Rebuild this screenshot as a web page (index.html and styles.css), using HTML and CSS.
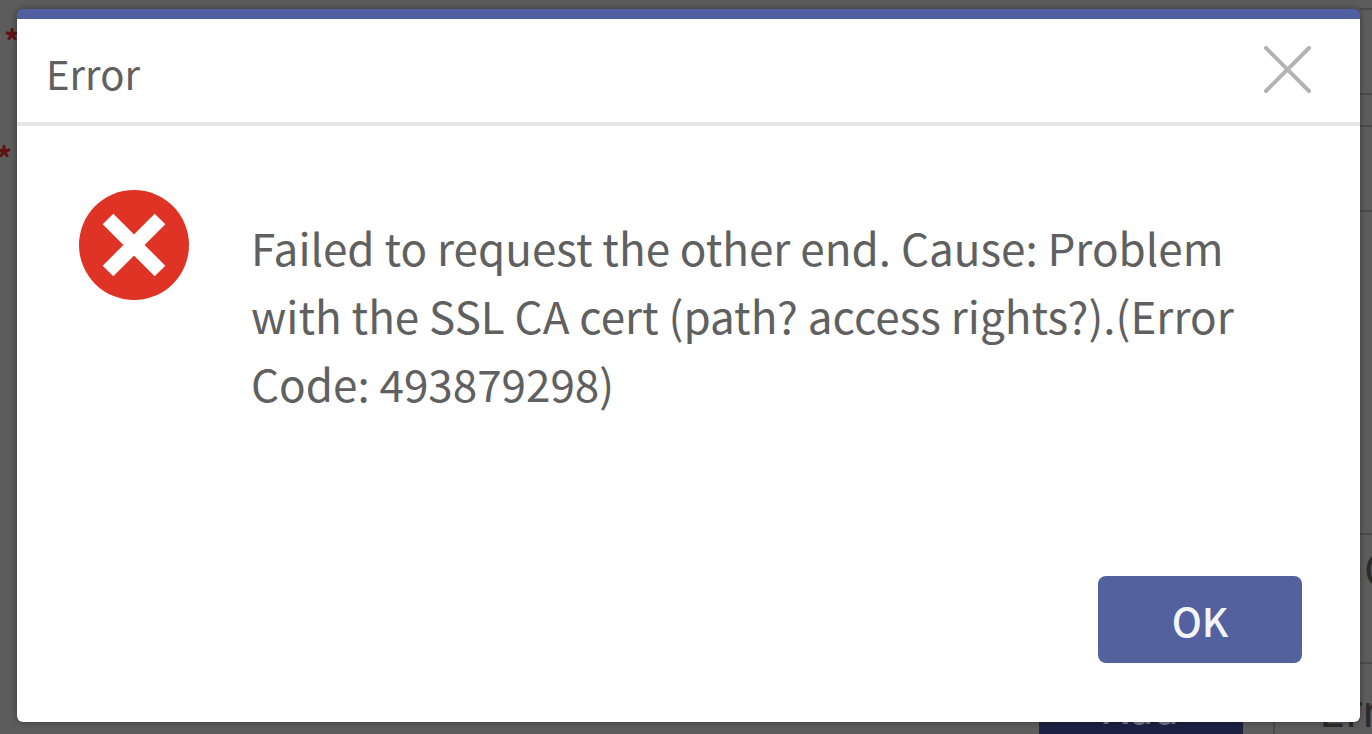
FILE: index.html
```html
<!DOCTYPE html>
<html lang="en">
<head>
    <meta charset="UTF-8">
    <meta name="viewport" content="width=device-width, initial-scale=1.0">
    <title>Error</title>
    <link rel="stylesheet" href="styles.css">
</head>
<body>
    <!-- form behind the dialog -->
    <div class="page">
        <div class="fields">
            <div class="required">
                <span class="indent">*</span>
                <span>*</span>
            </div>
            <div class="boxes">
                <div class="box"></div>
                <div class="space"></div>
                <div class="box"></div>
                <div class="big-space"></div>
                <div class="box last">C</div>
            </div>
        </div>
        <div class="bottom-row">
            <button class="add-btn">Add</button>
            <div class="cell">Err</div>
        </div>
    </div>

    <div class="dialog" role="alertdialog" aria-labelledby="title" aria-describedby="message">
        <div class="dialog-header">
            <h1 id="title">Error</h1>
            <button class="close-btn" aria-label="Close">
                <svg viewBox="0 0 50 50" width="50" height="50">
                    <path d="M3 2 L46 45 M46 2 L3 45" stroke="#b3b3b3" stroke-width="4" stroke-linecap="round" fill="none"/>
                </svg>
            </button>
        </div>
        <div class="dialog-body">
            <svg class="error-icon" viewBox="0 0 110 110" width="110" height="110">
                <circle cx="55" cy="55" r="55" fill="#df3326"/>
                <path d="M29 29 L81 81 M81 29 L29 81" stroke="#fff" stroke-width="15" fill="none"/>
            </svg>
            <p id="message">Failed to request the other end. Cause: Problem with the SSL CA cert (path? access rights?).(Error Code: 493879298)</p>
        </div>
        <div class="dialog-footer">
            <button class="ok-btn">OK</button>
        </div>
    </div>
</body>
</html>
```
FILE: styles.css
```css
* {
    box-sizing: border-box;
}
body {
    font-family: "Noto Sans CJK SC", "Noto Sans", sans-serif;
    margin: 0;
    color: #606060;
}
button {
    font-family: inherit;
    border: none;
    padding: 0;
    cursor: pointer;
}
.page {
    display: flex;
    flex-direction: column;
    height: 100vh;
    overflow: hidden;
    background: #5c5c5c;
    color: #2b2b2b;
}
.fields {
    display: flex;
    flex: 1;
    justify-content: space-between;
}
.required {
    display: flex;
    flex-direction: column;
    gap: 84px;
    padding-top: 24px;
    font-size: 32px;
    font-weight: 700;
    line-height: 33px;
    color: #5e1212;
    margin-left: -4px;
}
.indent {
    padding-left: 8px;
}
.boxes {
    display: flex;
    flex-direction: column;
    width: 12px;
    padding-top: 8px;
}
.box {
    height: 87px;
    border-top: 2px solid #4a4a4a;
    border-bottom: 2px solid #4a4a4a;
}
.space {
    height: 30px;
}
.big-space {
    flex: 1;
}
.last {
    height: 131px;
    padding: 6px 4px;
    font-size: 44px;
    line-height: 52px;
}
.bottom-row {
    display: flex;
    justify-content: flex-end;
    gap: 30px;
    height: 70px;
}
.add-btn {
    width: 204px;
    padding-top: 14px;
    background: #1c2142;
    color: #777a8c;
    font-size: 40px;
    font-weight: 500;
}
.cell {
    width: 99px;
    padding-left: 44px;
    border-left: 2px solid #4a4a4a;
    font-size: 44px;
    line-height: 88px;
}
.dialog {
    position: absolute;
    top: 9px;
    right: 12px;
    bottom: 12px;
    left: 17px;
    display: flex;
    flex-direction: column;
    background: #fff;
    border-top: 10px solid #4f5f9f;
    border-radius: 6px;
    box-shadow: 0 0 6px rgba(0, 0, 0, 0.4);
}
.dialog-header {
    display: flex;
    justify-content: space-between;
    align-items: center;
    padding: 0 47px 0 29px;
    height: 107px;
    border-bottom: 4px solid #e6e6e6;
}
.dialog-header h1 {
    margin: 0;
    padding-top: 4px;
    font-size: 40px;
    font-weight: 400;
}
.close-btn {
    background: none;
    height: 50px;
}
.dialog-body {
    display: flex;
    flex: 1;
    align-items: flex-start;
    gap: 62px;
    padding: 64px 100px 0 62px;
}
.error-icon {
    flex-shrink: 0;
}
.dialog-body p {
    margin: 23px 0 0;
    font-size: 44px;
    line-height: 68px;
}
.dialog-footer {
    display: flex;
    justify-content: flex-end;
    padding: 0 58px 59px;
}
.ok-btn {
    width: 204px;
    height: 87px;
    background: #53629e;
    color: #f4f5fa;
    font-size: 40px;
    font-weight: 500;
    border-radius: 8px;
}
```
